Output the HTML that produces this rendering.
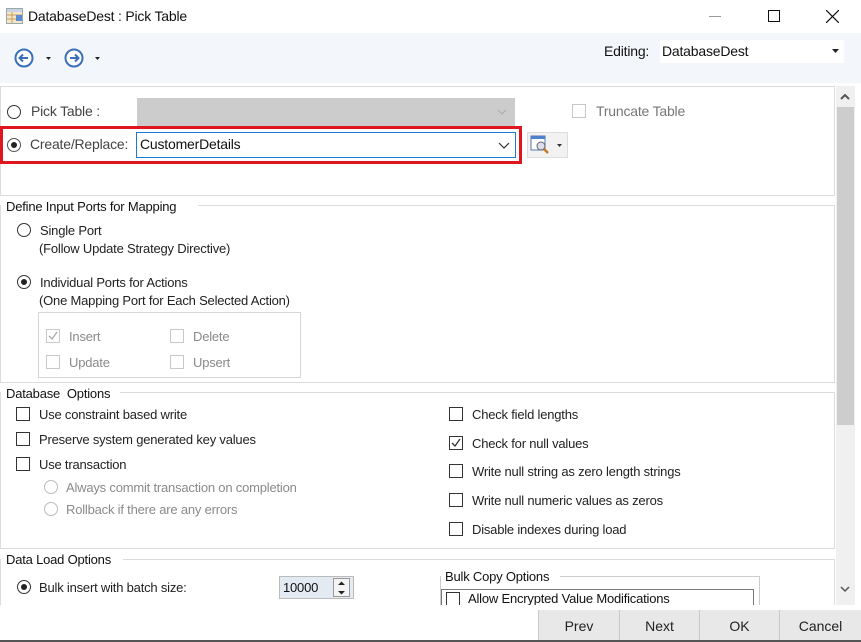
<!DOCTYPE html>
<html><head><meta charset="utf-8"><style>
*{box-sizing:border-box;margin:0;padding:0}
body{width:861px;height:642px;position:relative;overflow:hidden;background:#fff;font-family:"Liberation Sans",sans-serif;font-size:13px;color:#222}
.a{position:absolute}
.t{position:absolute;white-space:nowrap;line-height:15px;letter-spacing:-0.2px}
.g{color:#8a8a8a}
.rb{position:absolute;width:14px;height:14px;border:1px solid #333;border-radius:50%;background:#fff}
.rb.on::after{content:"";position:absolute;left:3px;top:3px;width:6px;height:6px;border-radius:50%;background:#222}
.rb.dis{border-color:#bbb}
.cb{position:absolute;width:14px;height:14px;border:1px solid #333;background:#fff}
.cb.dis{border-color:#c8c8c8}
.sec{position:absolute;border:1px solid #dcdcdc;background:#fff}
.btn{position:absolute;top:610px;height:32px;background:#e8e8e8;border-left:1px solid #c8c8c8;text-align:center;line-height:32px;font-size:14px}
</style></head><body>
<!-- title bar -->
<svg class="a" style="left:6px;top:8px" width="17" height="16"><rect x="0.5" y="0.5" width="16" height="15" fill="#f4e7c9" stroke="#9aa"/><rect x="1" y="1" width="15" height="3" fill="#c9d4e3"/><path d="M1 7H16M1 11H16M6 4V15" stroke="#c8a060"/><rect x="10" y="7" width="6" height="6" fill="#5b8bd1"/></svg>
<div class="t" style="left:28px;top:9px;font-size:14px;color:#111">DatabaseDest : Pick Table</div>
<div class="a" style="left:709px;top:16px;width:12px;height:1px;background:#999"></div>
<div class="a" style="left:768px;top:10px;width:12px;height:12px;border:1px solid #111"></div>
<svg class="a" style="left:826px;top:10px" width="13" height="13"><path d="M0 0L13 13M13 0L0 13" stroke="#111" stroke-width="1.2"/></svg>
<!-- toolbar -->
<div class="a" style="left:0;top:33px;width:861px;height:50px;background:#f3f6fa"></div>
<svg class="a" style="left:13px;top:47px" width="100" height="22"><circle cx="11" cy="11" r="8.5" fill="#fff" stroke="#3a70b8" stroke-width="2"/><path d="M15 11H7M10 7.5L6.5 11L10 14.5" stroke="#3a70b8" stroke-width="2" fill="none"/><path d="M33 10h5l-2.5 3z" fill="#222"/><circle cx="61" cy="11" r="8.5" fill="#fff" stroke="#3a70b8" stroke-width="2"/><path d="M57 11H65M62 7.5L65.5 11L62 14.5" stroke="#3a70b8" stroke-width="2" fill="none"/><path d="M82 10h5l-2.5 3z" fill="#222"/></svg>
<div class="t" style="left:604px;top:44px;font-size:14px;color:#111">Editing:</div>
<div class="a" style="left:660px;top:40px;width:184px;height:23px;background:#fff"></div>
<div class="t" style="left:662px;top:44px;font-size:14px;color:#111">DatabaseDest</div>
<svg class="a" style="left:832px;top:49px" width="8" height="5"><path d="M0 0h7l-3.5 4z" fill="#222"/></svg>
<!-- scrollbar -->
<div class="a" style="left:836px;top:86px;width:19px;height:519px;background:#f0f0f0"></div>
<div class="a" style="left:837px;top:107px;width:17px;height:318px;background:#cdcdcd"></div>
<svg class="a" style="left:840px;top:93px" width="10" height="7"><path d="M1 6L5 2L9 6" stroke="#555" stroke-width="2" fill="none"/></svg>
<svg class="a" style="left:840px;top:586px" width="10" height="7"><path d="M1 1L5 5L9 1" stroke="#555" stroke-width="1.5" fill="none"/></svg>
<!-- top section -->
<div class="sec" style="left:0;top:86px;width:835px;height:110px"></div>
<div class="rb" style="left:7px;top:105px"></div>
<div class="t" style="left:31px;top:104px;font-size:14px;color:#444">Pick Table :</div>
<div class="a" style="left:137px;top:98px;width:378px;height:28px;background:#cccccc"></div>
<svg class="a" style="left:497px;top:109px" width="10" height="6"><path d="M1 1L5 5L9 1" stroke="#aaa" fill="none"/></svg>
<div class="cb dis" style="left:572px;top:104px"></div>
<div class="t" style="left:596px;top:104px;font-size:14px;color:#777">Truncate Table</div>
<div class="a" style="left:0;top:126px;width:522px;height:38px;border:3px solid #e0161e"></div>
<div class="rb on" style="left:7px;top:138px;border-color:#555"></div>
<div class="t" style="left:30px;top:137px;font-size:14px;color:#444">Create/Replace:</div>
<div class="a" style="left:136px;top:132px;width:380px;height:26px;border:1px solid #1b7ad4;background:#fff"></div>
<div class="t" style="left:140px;top:137px;font-size:14px;color:#111">CustomerDetails</div>
<svg class="a" style="left:498px;top:142px" width="12" height="7"><path d="M1 1L6 6L11 1" stroke="#333" stroke-width="1.2" fill="none"/></svg>
<div class="a" style="left:527px;top:132px;width:41px;height:26px;border:1px solid #ddd;background:#f2f2f2"></div>
<svg class="a" style="left:530px;top:135px" width="36" height="20"><rect x="1" y="1" width="14" height="14" fill="#fff" stroke="#5577aa"/><rect x="1" y="1" width="14" height="3" fill="#4c7fcc"/><circle cx="11" cy="11" r="4" fill="#dde" stroke="#666"/><path d="M14 14L18 18" stroke="#c47a2a" stroke-width="2.5"/><path d="M27 9h5l-2.5 3z" fill="#333"/></svg>
<!-- define input ports -->
<div class="sec" style="left:0;top:205px;width:835px;height:178px;border-top:none"></div>
<div class="a" style="left:198px;top:205px;width:637px;height:1px;background:#dcdcdc"></div>
<div class="t" style="left:6px;top:199px;font-size:13px;color:#111;background:#fff;padding-right:3px">Define Input Ports for Mapping</div>
<div class="rb" style="left:17px;top:223px"></div>
<div class="t" style="left:40px;top:223px">Single Port</div>
<div class="t" style="left:39px;top:241px">(Follow Update Strategy Directive)</div>
<div class="rb on" style="left:17px;top:275px"></div>
<div class="t" style="left:40px;top:275px">Individual Ports for Actions</div>
<div class="t" style="left:39px;top:293px">(One Mapping Port for Each Selected Action)</div>
<div class="a" style="left:38px;top:312px;width:263px;height:66px;border:1px solid #d6d6d6"></div>
<div class="cb dis" style="left:46px;top:329px"></div>
<svg class="a" style="left:48px;top:331px" width="10" height="10"><path d="M1 5L4 8L9 1" stroke="#aaa" stroke-width="1.3" fill="none"/></svg>
<div class="t g" style="left:69px;top:329px">Insert</div>
<div class="cb dis" style="left:170px;top:329px"></div>
<div class="t g" style="left:193px;top:329px">Delete</div>
<div class="cb dis" style="left:46px;top:355px"></div>
<div class="t g" style="left:69px;top:355px">Update</div>
<div class="cb dis" style="left:170px;top:355px"></div>
<div class="t g" style="left:193px;top:355px">Upsert</div>
<!-- database options -->
<div class="sec" style="left:0;top:392px;width:835px;height:157px;border-top:none"></div>
<div class="a" style="left:120px;top:392px;width:715px;height:1px;background:#dcdcdc"></div>
<div class="t" style="left:6px;top:386px;color:#111">Database&nbsp; Options</div>
<div class="cb" style="left:16px;top:407px"></div><div class="t" style="left:39px;top:407px">Use constraint based write</div>
<div class="cb" style="left:16px;top:432px"></div><div class="t" style="left:39px;top:432px">Preserve system generated key values</div>
<div class="cb" style="left:16px;top:457px"></div><div class="t" style="left:39px;top:457px">Use transaction</div>
<div class="rb dis" style="left:44px;top:480px"></div><div class="t g" style="left:66px;top:480px">Always commit transaction on completion</div>
<div class="rb dis" style="left:44px;top:502px"></div><div class="t g" style="left:66px;top:502px">Rollback if there are any errors</div>
<div class="cb" style="left:449px;top:407px"></div><div class="t" style="left:472px;top:407px">Check field lengths</div>
<div class="cb" style="left:449px;top:436px"></div>
<svg class="a" style="left:451px;top:438px" width="10" height="10"><path d="M1 5L4 8L9 1" stroke="#333" stroke-width="1.3" fill="none"/></svg>
<div class="t" style="left:472px;top:436px">Check for null values</div>
<div class="cb" style="left:449px;top:464px"></div><div class="t" style="left:472px;top:464px">Write null string as zero length strings</div>
<div class="cb" style="left:449px;top:493px"></div><div class="t" style="left:472px;top:493px">Write null numeric values as zeros</div>
<div class="cb" style="left:449px;top:522px"></div><div class="t" style="left:472px;top:522px">Disable indexes during load</div>
<!-- data load -->
<div class="sec" style="left:0;top:559px;width:835px;height:60px;border-top:none"></div>
<div class="a" style="left:123px;top:559px;width:712px;height:1px;background:#dcdcdc"></div>
<div class="t" style="left:6px;top:552px;color:#111">Data Load Options</div>
<div class="rb on" style="left:17px;top:580px"></div>
<div class="t" style="left:39px;top:580px">Bulk insert with batch size:</div>
<div class="a" style="left:279px;top:576px;width:75px;height:23px;border:1px solid #bbb;background:#e4eaf2"></div>
<div class="t" style="left:283px;top:580px;color:#111">10000</div>
<div class="a" style="left:333px;top:578px;width:17px;height:19px;border:1px solid #999;background:#f4f4f4"></div>
<svg class="a" style="left:337px;top:581px" width="9" height="14"><path d="M1 4L4.5 0.5L8 4z M1 10L4.5 13.5L8 10z" fill="#222"/></svg>
<div class="a" style="left:440px;top:576px;width:320px;height:40px;border:1px solid #ccc;border-top:none"></div>
<div class="a" style="left:560px;top:576px;width:200px;height:1px;background:#ccc"></div>
<div class="t" style="left:445px;top:569px;color:#111">Bulk Copy Options</div>
<div class="a" style="left:441px;top:589px;width:313px;height:25px;border:1px solid #777;background:#fff"></div>
<div class="cb" style="left:446px;top:592px"></div>
<div class="t" style="left:468px;top:591px;color:#111">Allow Encrypted Value Modifications</div>
<!-- buttons -->
<div class="a" style="left:0;top:605px;width:861px;height:37px;background:#fff"></div>
<div class="btn" style="left:538px;width:81px">Prev</div>
<div class="btn" style="left:619px;width:80px">Next</div>
<div class="btn" style="left:699px;width:80px">OK</div>
<div class="btn" style="left:779px;width:82px">Cancel</div>
<div class="a" style="left:0;top:640px;width:861px;height:2px;background:#555"></div>
</body></html>
